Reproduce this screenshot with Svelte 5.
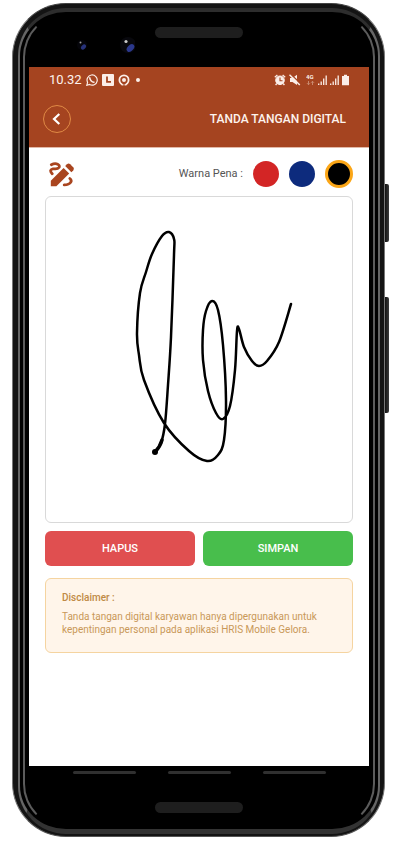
<script>
  const pens = [
    { id: 'merah', label: 'Merah', color: '#d32525' },
    { id: 'biru', label: 'Biru', color: '#0d2b7d' },
    { id: 'hitam', label: 'Hitam', color: '#000000' }
  ];

  let pen = $state('hitam');

  // Sampled pen positions of the stored signature.
  let points = $state([
    [109, 255], [115, 246], [119, 227], [122, 188], [125, 140], [128, 58],
    [128, 42], [123, 35], [116, 39], [106, 57], [100, 75], [94, 96], [91, 136],
    [93, 158], [98, 183], [118, 226], [143, 254], [161, 264], [172, 258],
    [178, 243], [180, 203], [177, 148], [172, 113], [166, 104], [160, 114],
    [157, 133], [157, 163], [162, 194], [170, 216], [177, 222], [184, 209],
    [189, 173], [191, 134], [193, 132], [198, 150], [206, 164], [213, 169],
    [221, 164], [233, 145], [245, 107]
  ]);

  // Smooth curve through every sample.
  const path = $derived.by(() => {
    if (!points.length) return '';
    let d = `M${points[0]}`;
    for (let i = 0; i < points.length - 1; i++) {
      const a = points[i - 1] ?? points[i];
      const b = points[i];
      const c = points[i + 1];
      const e = points[i + 2] ?? c;
      d += `C${b[0] + (c[0] - a[0]) / 6},${b[1] + (c[1] - a[1]) / 6} ${c[0] - (e[0] - b[0]) / 6},${c[1] - (e[1] - b[1]) / 6} ${c}`;
    }
    return d;
  });

  const penColor = $derived(pens.find((p) => p.id === pen).color);
</script>

<div class="stage">
  <div class="shell">
    <span class="side power"></span>
    <span class="side volume"></span>
    <div class="rim">
      <div class="glass">
        <div class="top-bezel">
          <svg class="cameras" width="60" height="20" viewBox="0 0 60 20" aria-hidden="true">
            <circle cx="7" cy="10" r="5" fill="#05050a" />
            <ellipse cx="8.500" cy="12" rx="2" ry="3" fill="#27327a" transform="rotate(45 8.500 12)" />
            <circle cx="5.500" cy="7.500" r="1" fill="#999" />
            <circle cx="53" cy="10" r="8" fill="#08080d" />
            <ellipse cx="55.500" cy="13" rx="3" ry="4.500" fill="#2b388c" transform="rotate(45 55.500 13)" />
            <circle cx="51" cy="6.500" r="1.600" fill="#ccc" />
          </svg>
          <span class="speaker"></span>
        </div>

        <main class="screen">
          <header>
            <div class="status">
              <span class="time">10.32</span>
              <svg width="12" height="12" viewBox="0 0 12 12" fill="none" stroke="#fbeee8">
                <path d="M.8 11.300l.8-2.900A5.100 5.100 0 1 1 3.600 10.500z" stroke-width="1.200" />
                <path d="M3.900 3.300c-.7 2.200 2.300 5.400 4.600 4.800" stroke-width="1.600" />
              </svg>
              <svg width="12" height="12" viewBox="0 0 12 12">
                <rect width="12" height="12" rx="1" fill="#fbeee8" />
                <path d="M5 2.500v5.300h4" fill="none" stroke="#a54420" stroke-width="1.800" />
              </svg>
              <svg width="12" height="12" viewBox="0 0 12 12">
                <circle cx="6" cy="6" r="4.600" fill="none" stroke="#fbeee8" stroke-width="1.800" />
                <path d="M6 12V7" stroke="#a54420" stroke-width="3.200" />
                <circle cx="6" cy="6" r="2" fill="#fbeee8" />
                <path d="M3.500 10.600l2 .2M6.500 10.800l2-.2" stroke="#fbeee8" stroke-width="1.200" />
              </svg>
              <span class="dot"></span>
              <div class="signals">
                <svg width="12" height="12" viewBox="0 0 12 12" fill="none" stroke="#fbeee8">
                  <circle cx="6" cy="6.300" r="4.300" fill="#fbeee8" />
                  <path d="M.8 3.200l2.600-2.200M11.200 3.200L8.600 1M2.800 9.500l-1.200 1.500M9.200 9.500l1.200 1.500" stroke-width="1.300" />
                  <path d="M6 3.500v3.300h2.500" stroke="#a54420" stroke-width="1.100" />
                </svg>
                <svg width="12" height="12" viewBox="0 0 12 12">
                  <path d="M1 4h2.500L8 .8V11L3.500 8H1z" fill="#fbeee8" />
                  <path d="M1.500 0L12 10" stroke="#a54420" stroke-width="1.300" />
                  <path d="M.5 .8L10.800 11" stroke="#fbeee8" stroke-width="1.500" />
                </svg>
                <svg class="net" width="9" height="12" viewBox="0 0 9 12">
                  <text x="0" y="5" font-size="6" font-weight="700" fill="#fbeee8">4G</text>
                  <path d="M2.500 7v3.500M1 9.200l1.500 1.500L4 9.200M6.500 11V7.500M5 8.800l1.500-1.500L8 8.800" fill="none" stroke="#d29a83" stroke-width=".8" />
                </svg>
                {#each [0, 1] as sim (sim)}
                  <svg width="9" height="12" viewBox="0 0 9 12" stroke="#fbeee8" stroke-width="1.300">
                    <path d="M.7 11V9.500M3.200 11V7.500M5.700 11V4.500M8.200 11V1.500" />
                  </svg>
                {/each}
                <svg width="7" height="12" viewBox="0 0 7 12">
                  <path d="M2 .8h3V2h2v9.300H0V2h2z" fill="#fbeee8" />
                </svg>
              </div>
            </div>
            <div class="bar">
              <button class="back" aria-label="Kembali">
                <svg width="12" height="12" viewBox="0 0 12 12">
                  <path d="M8.300 1L3 6l5.300 5" fill="none" stroke="#fff" stroke-width="2.200" />
                </svg>
              </button>
              <h1>TANDA TANGAN DIGITAL</h1>
            </div>
          </header>

          <section class="content">
            <div class="tools">
              <svg width="26" height="26" viewBox="0 0 26 26">
                <path d="M3.200 12.800C.6 10 1.500 8.300 4 7.900c2.500-.4 4.500.6 6-1.400C11.500 4 7.500 1 2.300 3.700" fill="none" stroke="#a9451f" stroke-width="2.800" stroke-linecap="round" />
                <path d="M1.800 19.800L14.600 7l5.600 5.600L7.400 25.200H1.800z" fill="#a9451f" />
                <path d="M16.200 5l1.800-1.800q1.600-1.500 3.200 0l3 3q1.500 1.600 0 3.200L22.400 11.200z" fill="#a9451f" />
                <path d="M20.800 17.500c2.600 2 1.600 6.200-5.600 6.400" fill="none" stroke="#a9451f" stroke-width="2.800" stroke-linecap="round" />
              </svg>
              <div class="pens" role="radiogroup" aria-labelledby="pen-label">
                <span id="pen-label">Warna Pena :</span>
                {#each pens as p (p.id)}
                  <input
                    type="radio"
                    name="pen"
                    value={p.id}
                    aria-label={p.label}
                    bind:group={pen}
                    style="background-color: {p.color}"
                  />
                {/each}
              </div>
            </div>

            <div class="pad">
              <svg viewBox="0 0 306 325" role="img" aria-label="Tanda tangan">
                <path d={path} fill="none" stroke={penColor} stroke-width="2.500" stroke-linecap="round" stroke-linejoin="round" />
                {#if points.length}
                  <circle cx={points[0][0]} cy={points[0][1]} r="3" fill={penColor} />
                  <path d="M109 255Q114 250 116 243" fill="none" stroke={penColor} stroke-width="3.500" stroke-linecap="round" />
                {/if}
              </svg>
            </div>

            <div class="actions">
              <button class="erase" onclick={() => (points = [])}>HAPUS</button>
              <button class="save">SIMPAN</button>
            </div>

            <aside>
              <h2>Disclaimer :</h2>
              <p>Tanda tangan digital karyawan hanya dipergunakan untuk kepentingan personal pada aplikasi HRIS Mobile Gelora.</p>
            </aside>
          </section>
        </main>

        <div class="bottom-bezel">
          <div class="nav"><span></span><span></span><span></span></div>
          <span class="speaker"></span>
        </div>
      </div>
    </div>
  </div>
</div>

<style>
  :global(body) {
    background: #fff;
  }

  .stage {
    box-sizing: border-box;
    min-height: 100vh;
    padding: 3px 15px 7px 12px;
    display: flex;
    font-family: Roboto, 'Liberation Sans', sans-serif;
  }

  .stage * {
    box-sizing: border-box;
  }

  .shell {
    position: relative;
    flex: 1;
    display: flex;
    padding: 4px 4px 2px 5px;
    border: 1px solid #777;
    border-top-color: #444;
    border-bottom-color: #555;
    border-radius: 54px;
    background: #141414;
  }

  .side {
    position: absolute;
    right: -5px;
    width: 4px;
    border-radius: 0 2px 2px 0;
    background: linear-gradient(to right, #111, #3c3c3c);
  }

  .power {
    top: 180px;
    height: 58px;
  }

  .volume {
    top: 293px;
    height: 116px;
  }

  .rim {
    flex: 1;
    display: flex;
    padding: 1px 3px;
    border: 2px solid #666;
    border-top: 4px solid #2d2d2d;
    border-bottom: 5px solid #333;
    border-radius: 48px;
    background: #000;
  }

  .glass {
    flex: 1;
    display: flex;
    flex-direction: column;
    padding: 0 4px;
    border: 2px solid #5c5c5c;
    border-top-color: #000;
    border-bottom-color: #000;
    border-radius: 44px;
    background: #000;
  }

  .top-bezel {
    position: relative;
    display: flex;
    justify-content: center;
    height: 52px;
    padding-top: 12px;
  }

  .cameras {
    position: absolute;
    left: 46px;
    top: 20px;
  }

  .speaker {
    width: 88px;
    height: 11px;
    border-radius: 6px;
    background: #1e1e1e;
  }

  .screen {
    flex: 1;
    background: #fff;
  }

  header {
    height: 81px;
    border-bottom: 1px solid #e2b9a8;
    background: #a54420;
    color: #fdf3ee;
  }

  .status {
    display: flex;
    align-items: center;
    gap: 4px;
    height: 25px;
    padding: 0 20px;
  }

  .time {
    font-size: 13px;
    line-height: 16px;
  }

  .dot {
    width: 4px;
    height: 4px;
    margin-left: 2px;
    border-radius: 2px;
    background: #fbeee8;
  }

  .signals {
    display: flex;
    gap: 3px;
    margin-left: auto;
  }

  .net {
    margin-left: 2px;
  }

  .bar {
    display: flex;
    align-items: center;
    justify-content: space-between;
    height: 53px;
    padding: 0 23px 0 14px;
  }

  .back {
    display: flex;
    align-items: center;
    justify-content: center;
    width: 28px;
    height: 28px;
    padding: 0;
    border: 1px solid #e08a45;
    border-radius: 50%;
    background: none;
  }

  h1 {
    margin: 0;
    font-size: 12px;
    font-weight: 500;
    line-height: 16px;
  }

  .content {
    padding: 12px 16px 0;
  }

  .tools {
    display: flex;
    align-items: center;
    justify-content: space-between;
    height: 28px;
    padding-left: 4px;
  }

  .pens {
    display: flex;
    align-items: center;
    gap: 10px;
    color: #555;
    font-size: 11px;
    line-height: 16px;
  }

  input {
    appearance: none;
    width: 26px;
    height: 26px;
    margin: 0;
    border-radius: 50%;
  }

  input:checked {
    width: 28px;
    height: 28px;
    border: 3px solid #fba617;
  }

  .pad {
    margin-top: 8px;
    border: 1px solid #d9d9d9;
    border-radius: 6px;
  }

  .pad svg {
    display: block;
    width: 100%;
  }

  .actions {
    display: flex;
    gap: 8px;
    margin-top: 8px;
  }

  .actions button {
    flex: 1;
    height: 35px;
    padding: 0;
    border: 0;
    border-radius: 6px;
    color: #fff;
    font-family: inherit;
    font-size: 11px;
    font-weight: 500;
  }

  .erase {
    background: #e04f50;
  }

  .save {
    background: #48be4c;
  }

  aside {
    margin-top: 12px;
    padding: 12px 16px 16px;
    border: 1px solid #f5d4a0;
    border-radius: 6px;
    background: #fff5ea;
    color: #c99858;
    font-size: 10px;
    line-height: 13px;
  }

  h2 {
    margin: 0 0 6px;
    color: #c08a45;
    font-size: 10px;
    font-weight: 500;
    line-height: 13px;
  }

  p {
    margin: 0;
  }

  .bottom-bezel {
    display: flex;
    flex-direction: column;
    align-items: center;
    height: 60px;
    padding-top: 5px;
  }

  .nav {
    display: flex;
    gap: 32px;
    margin-bottom: 28px;
  }

  .nav span {
    width: 63px;
    height: 3px;
    border-radius: 2px;
    background: #303030;
  }
</style>
